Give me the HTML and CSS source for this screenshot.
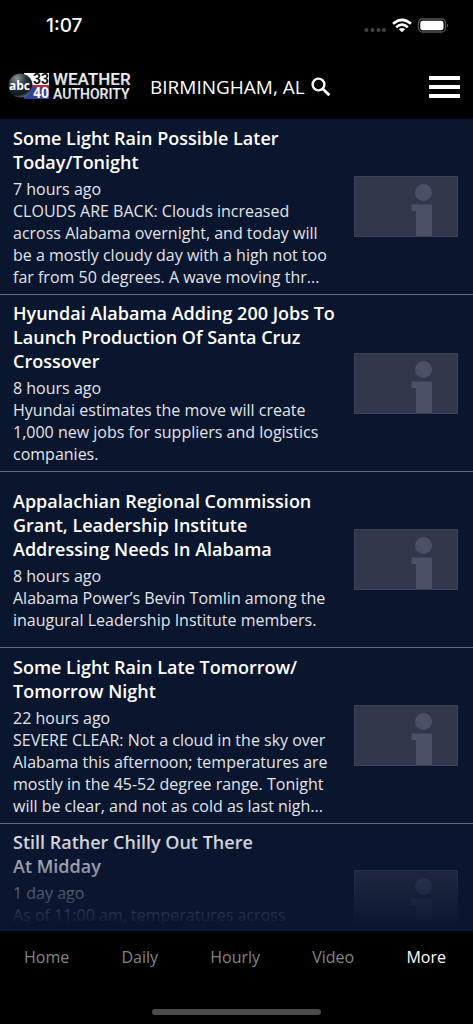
FILE: index.html
```html
<!DOCTYPE html>
<html lang="en">
<head>
<meta charset="utf-8">
<meta name="viewport" content="width=device-width, initial-scale=1">
<title>Weather Authority</title>
<link rel="stylesheet" href="styles.css">
</head>
<body>
<svg width="0" height="0" class="defs" aria-hidden="true">
  <symbol id="info" viewBox="0 0 104 61">
    <rect x="0.5" y="0.5" width="103" height="60" fill="#30374b" stroke="#3b4258"/>
    <circle cx="69.500" cy="16.500" r="8.500" fill="#4b5066"/>
    <path d="M57.500 28.500H78V60H62V35H57.500Z" fill="#4b5066"/>
  </symbol>
</svg>
<div class="app">
  <div class="status">
    <span class="clock">1:07</span>
    <svg class="indicators" width="86" height="18" viewBox="0 0 86 18" aria-hidden="true">
      <g fill="#444"><circle cx="3.500" cy="13" r="2"/><circle cx="9.500" cy="13" r="2"/><circle cx="15.500" cy="13" r="2"/><circle cx="21" cy="13" r="2"/></g>
      <g fill="none" stroke="#fff" stroke-width="2.600"><path d="M30 6.800Q39 -1 48 6.800"/><path d="M33.200 10.200Q39 5.200 44.800 10.200"/></g>
      <path d="M35.800 12.300Q39 9.800 42.200 12.300L39 15.300Z" fill="#fff"/>
      <rect x="55.500" y="2" width="27" height="13" rx="4" fill="none" stroke="#555" stroke-width="1.300"/>
      <rect x="57.300" y="3.800" width="23.200" height="9.400" rx="2.300" fill="#fff"/>
      <path d="M84 6.500Q86 8.500 84 10.500Z" fill="#666"/>
    </svg>
  </div>
  <header class="header">
    <svg class="logo" width="124" height="30" viewBox="0 0 124 30" role="img" aria-label="abc 33/40 Weather Authority">
      <defs><radialGradient id="ball" cx="35%" cy="20%" r="85%"><stop offset="0" stop-color="#8d969c"/><stop offset=".45" stop-color="#26343c"/><stop offset=".8" stop-color="#10191f"/><stop offset="1" stop-color="#66777f"/></radialGradient>
      <linearGradient id="silver" x1="0" y1="0" x2="0" y2="1"><stop offset="0" stop-color="#fff"/><stop offset="1" stop-color="#c5cad6"/></linearGradient></defs>
      <rect x="16" y="1" width="25" height="12" fill="#fff"/>
      <rect x="16" y="13" width="25" height="2" fill="#d5202c"/>
      <rect x="16" y="15" width="25" height="12" fill="#33429a"/>
      <circle cx="12.500" cy="13.500" r="12" fill="url(#ball)"/>
      <text class="logo-abc" x="1" y="18">abc</text>
      <text class="logo-num" x="25" y="12" fill="#111">33</text>
      <text class="logo-num" x="25" y="26" fill="#fff">40</text>
      <text class="logo-top" x="45" y="13" fill="url(#silver)">WEATHER</text>
      <text class="logo-bottom" x="45" y="27" fill="url(#silver)">AUTHORITY</text>
    </svg>
    <button class="location" type="button">BIRMINGHAM, AL
      <svg width="20" height="20" viewBox="0 0 20 20" fill="none" stroke="#fff" aria-hidden="true"><circle cx="7.500" cy="7.500" r="5.900" stroke-width="2.400"/><path d="M12 12L18.300 18.300" stroke-width="2.700"/></svg>
    </button>
    <button class="menu" type="button" aria-label="Menu"><span></span><span></span><span></span></button>
  </header>
  <main class="feed">
    <article class="story">
      <div class="copy"><h2>Some Light Rain Possible Later<br>Today/Tonight</h2><time>7 hours ago</time>
      <p>CLOUDS ARE BACK: Clouds increased<br>across Alabama overnight, and today will<br>be a mostly cloudy day with a high not too<br>far from 50 degrees. A wave moving thr...</p></div>
      <svg class="thumb"><use href="#info"/></svg>
    </article>
    <article class="story">
      <div class="copy"><h2>Hyundai Alabama Adding 200 Jobs To<br>Launch Production Of Santa Cruz<br>Crossover</h2><time>8 hours ago</time>
      <p>Hyundai estimates the move will create<br>1,000 new jobs for suppliers and logistics<br>companies.</p></div>
      <svg class="thumb"><use href="#info"/></svg>
    </article>
    <article class="story">
      <div class="copy"><h2>Appalachian Regional Commission<br>Grant, Leadership Institute<br>Addressing Needs In Alabama</h2><time>8 hours ago</time>
      <p>Alabama Power’s Bevin Tomlin among the<br>inaugural Leadership Institute members.</p></div>
      <svg class="thumb"><use href="#info"/></svg>
    </article>
    <article class="story">
      <div class="copy"><h2>Some Light Rain Late Tomorrow/<br>Tomorrow Night</h2><time>22 hours ago</time>
      <p>SEVERE CLEAR: Not a cloud in the sky over<br>Alabama this afternoon; temperatures are<br>mostly in the 45-52 degree range. Tonight<br>will be clear, and not as cold as last nigh...</p></div>
      <svg class="thumb"><use href="#info"/></svg>
    </article>
    <article class="story story-short">
      <div class="copy"><h2>Still Rather Chilly Out There<br>At Midday</h2><time>1 day ago</time>
      <p>As of 11:00 am, temperatures across</p></div>
      <svg class="thumb"><use href="#info"/></svg>
    </article>
    <div class="fade"></div>
  </main>
  <footer class="footer">
    <nav class="tabs">
      <a href="#home">Home</a><a href="#daily">Daily</a><a href="#hourly">Hourly</a><a href="#video">Video</a><a href="#more" aria-current="page">More</a>
    </nav>
    <div class="home-bar"></div>
  </footer>
</div>
</body>
</html>
```
FILE: styles.css
```css
* { box-sizing: border-box; }
body { margin: 0; background: #000; color: #fff; font-family: "Open Sans", "Noto Sans", sans-serif; }
button { border: 0; padding: 0; background: none; color: inherit; font: inherit; }
.defs { position: absolute; }
.app { display: flex; flex-direction: column; height: 100vh; }

.status { display: flex; justify-content: space-between; align-items: center; flex: none; height: 52px; padding: 0 24px 0 46px; }
.clock { font: 500 19px/24px Inter, sans-serif; }

.header { display: flex; align-items: center; flex: none; height: 67px; padding: 2px 13px 0 8px; }
.logo { flex: none; overflow: visible; }
.logo-abc { font: 700 12px "Open Sans", sans-serif; fill: #fff; }
.logo-num { font: 700 14px Roboto, sans-serif; }
.logo-top { font: 600 17px Roboto, sans-serif; }
.logo-bottom { font: 600 14px Roboto, sans-serif; }
.location { display: flex; align-items: center; gap: 6px; margin-left: 18px; font-size: 19px; line-height: 24px; white-space: nowrap; }
.menu { display: flex; flex-direction: column; gap: 5px; width: 31px; margin-left: auto; }
.menu span { height: 4px; background: #fff; }

.feed { position: relative; flex: 1; min-height: 0; overflow: hidden; background: #0a152e; }
.story { display: flex; align-items: center; justify-content: space-between; min-height: 176px; padding: 6px 15px 6px 13px; border-bottom: 1px solid #626a7c; }
.copy { white-space: nowrap; }
.copy h2 { margin: 0 0 4px; font-size: 18px; line-height: 24px; font-weight: 600; }
.copy time, .copy p { display: block; margin: 0; color: #e2e4e8; font-size: 16px; line-height: 22px; }
.thumb { flex: none; width: 104px; height: 61px; }
.story-short { min-height: 152px; border-bottom: 0; }
.story-short .copy { align-self: flex-start; }
.fade { position: absolute; left: 0; right: 0; bottom: 0; height: 108px; background: linear-gradient(rgba(10, 21, 48, 0), rgba(10, 21, 48, 1) 96%); }

.footer { display: flex; flex-direction: column; align-items: center; justify-content: space-between; flex: none; height: 93px; padding: 14px 0 9px; }
.tabs { display: flex; width: 100%; justify-content: space-between; padding: 0 27px 0 24px; }
.tabs a { color: #858585; font-size: 16px; line-height: 24px; text-decoration: none; }
.tabs a[aria-current] { color: #fff; }
.home-bar { width: 169px; height: 6px; border-radius: 3px; background: #4b4b4b; }
```
